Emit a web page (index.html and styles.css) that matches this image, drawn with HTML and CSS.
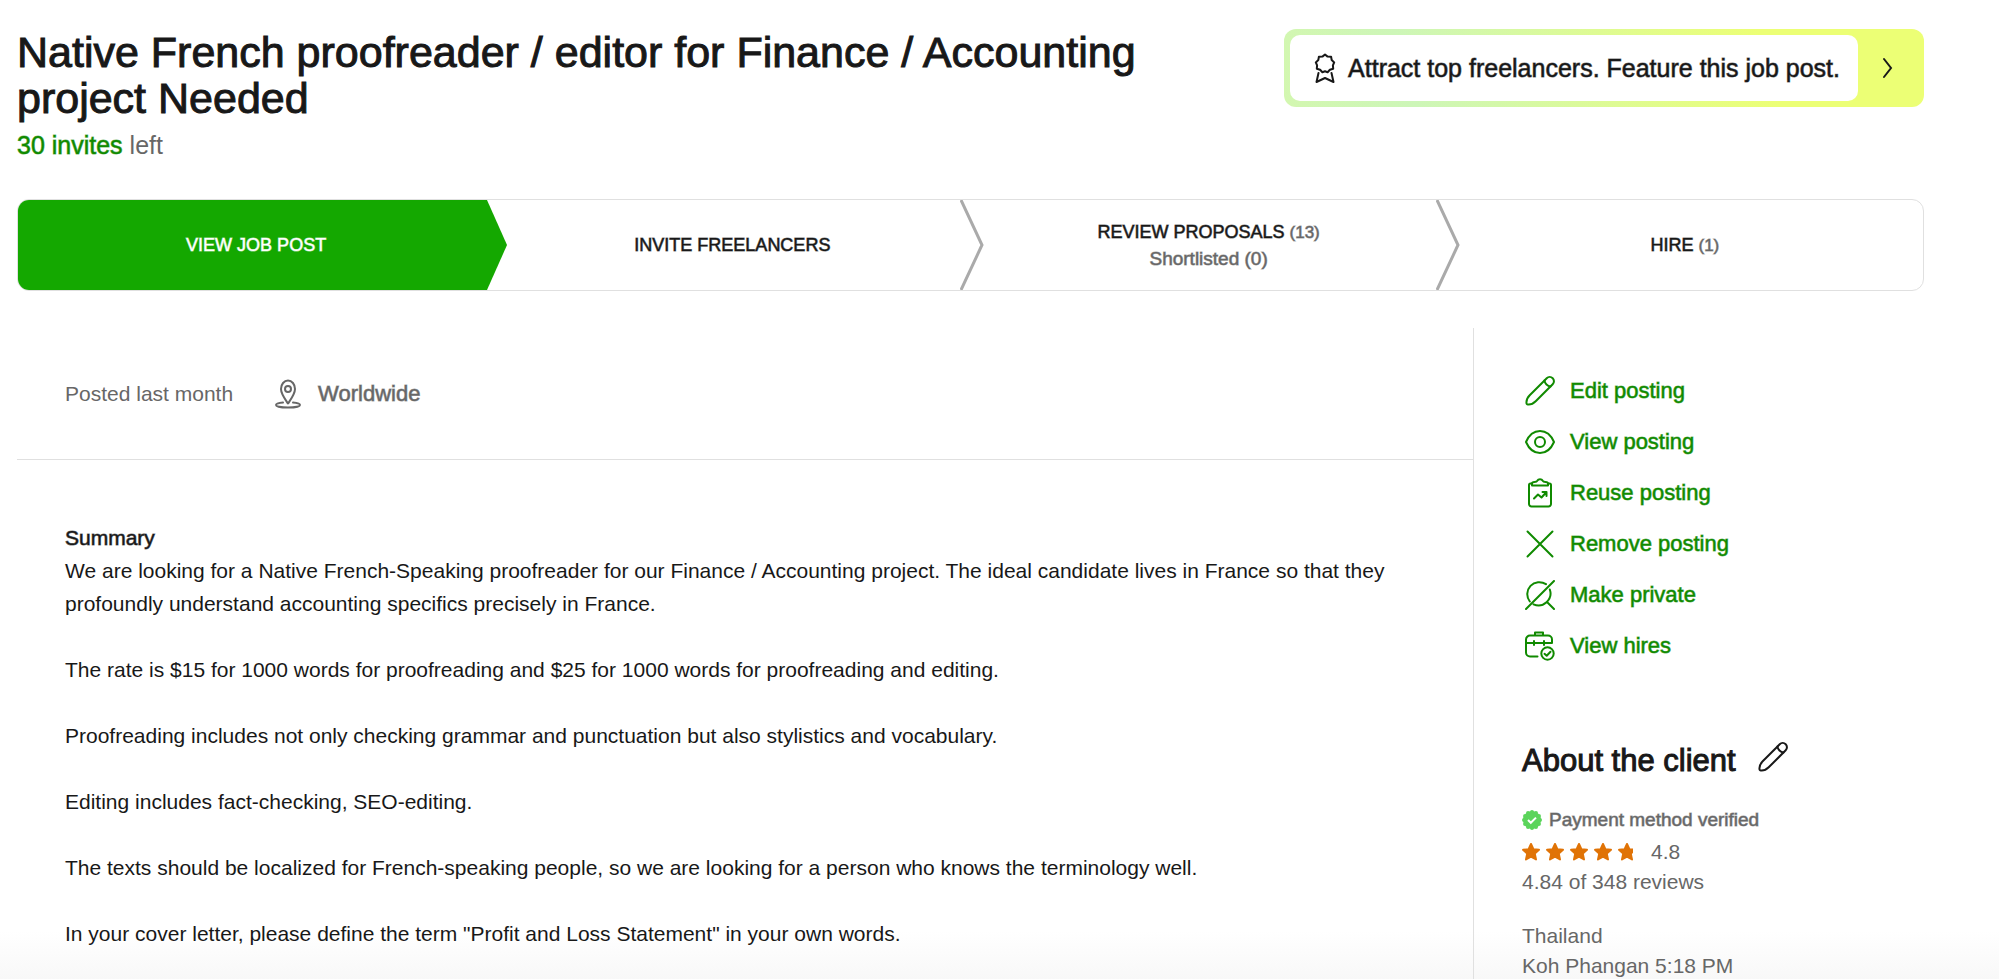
FILE: index.html
```
<!DOCTYPE html>
<html lang="en">
<head>
    <meta charset="UTF-8" />
    <meta name="viewport" content="width=device-width, initial-scale=1.0" />
    <title>Native French proofreader / editor - Job post</title>
    <link rel="stylesheet" href="styles.css">
</head>
<body>

    <!-- Job title + feature banner -->
    <header class="page-header">
        <div class="job-heading">
            <h1>Native French proofreader / editor for Finance / Accounting project Needed</h1>
            <p class="invites"><strong>30 invites</strong> left</p>
        </div>
        <a href="#feature" class="feature-banner">
            <span class="feature-text">
                <svg class="icon" viewBox="0 0 30 30">
                    <path d="M15 1.500l2.600 2.100 3.500.2.6 3.300 2.500 2.300-1.300 3 .3 3.300-3.300 1-2.300 2.500-2.600-.9-2.600.9-2.300-2.500-3.300-1 .3-3.300-1.300-3 2.500-2.300.6-3.300 3.500-.2z" />
                    <path d="M8.500 20l-2 9 8.500-4 8.500 4-2-9" />
                </svg>
                Attract top freelancers. Feature this job post.
            </span>
            <svg class="feature-arrow" viewBox="0 0 12 22">
                <path d="M2 2l7 9-7 9" />
            </svg>
        </a>
    </header>

    <!-- Hiring steps -->
    <nav class="steps">
        <a href="#view" class="step active">
            <span>VIEW JOB POST</span>
            <svg class="step-arrow" viewBox="0 0 24 90" preserveAspectRatio="none">
                <path d="M0 0h4l20 45-20 45H0z" />
            </svg>
        </a>
        <a href="#invite" class="step">
            <span>INVITE FREELANCERS</span>
            <svg class="step-arrow" viewBox="0 0 24 90" preserveAspectRatio="none">
                <path d="M1 0l21 45-21 45" />
            </svg>
        </a>
        <a href="#review" class="step">
            <span>REVIEW PROPOSALS <span class="count">(13)</span></span>
            <span class="shortlisted">Shortlisted (0)</span>
            <svg class="step-arrow" viewBox="0 0 24 90" preserveAspectRatio="none">
                <path d="M1 0l21 45-21 45" />
            </svg>
        </a>
        <a href="#hire" class="step">
            <span>HIRE <span class="count">(1)</span></span>
        </a>
    </nav>

    <div class="content">
        <main class="job">
            <div class="job-meta">
                <span>Posted last month</span>
                <span class="location">
                    <svg class="icon" viewBox="0 0 30 30">
                        <path d="M15 24.500c-3-4.500-7-9.500-7-14.500a7 8.500 0 0 1 14 0c0 5-4 10-7 14.500z" />
                        <circle cx="15" cy="10" r="3" />
                        <path d="M10 23.500c-4 .4-7 1.200-7 2.400 0 1.600 5 2.600 12 2.600s12-1 12-2.600c0-1.200-3-2-7-2.400" />
                    </svg>
                    Worldwide
                </span>
            </div>

            <div class="job-description">
                <h2>Summary</h2>
                <p>We are looking for a Native French-Speaking proofreader for our Finance / Accounting project. The ideal candidate lives in France so that they profoundly understand accounting specifics precisely in France.</p>
                <p>The rate is $15 for 1000 words for proofreading and $25 for 1000 words for proofreading and editing.</p>
                <p>Proofreading includes not only checking grammar and punctuation but also stylistics and vocabulary.</p>
                <p>Editing includes fact-checking, SEO-editing.</p>
                <p>The texts should be localized for French-speaking people, so we are looking for a person who knows the terminology well.</p>
                <p>In your cover letter, please define the term "Profit and Loss Statement" in your own words.</p>
            </div>
        </main>

        <aside class="sidebar">
            <ul class="actions">
                <li><a href="#edit">
                    <svg class="icon" viewBox="0 0 30 30">
                        <path d="M19.500 4.500l2.200-2.200a4.200 4.200 0 0 1 6 6l-17 17c-2.200 2.200-5.500 3.500-8 3.200a1.200 1.200 0 0 1-1.200-1.200c-.3-2.500 1-5.800 3.200-8z" />
                        <path d="M19.500 4.500c.3 3 3 5.700 6 6" />
                    </svg>
                    Edit posting</a></li>
                <li><a href="#view-posting">
                    <svg class="icon" viewBox="0 0 30 30">
                        <path d="M1 15c3-7 8-11 14-11s11 4 14 11c-3 7-8 11-14 11S4 22 1 15z" />
                        <circle cx="15" cy="15" r="5" />
                    </svg>
                    View posting</a></li>
                <li><a href="#reuse">
                    <svg class="icon" viewBox="0 0 30 30">
                        <path d="M7 5.500H5.500a1.500 1.500 0 0 0-1.500 1.500v19a2.500 2.500 0 0 0 2.500 2.500h17a2.500 2.500 0 0 0 2.500-2.500V7a1.500 1.500 0 0 0-1.500-1.500H23" />
                        <path d="M7 7.500V5.500c0-1 1-1.500 2.500-1.500 2 0 2.500-.5 3-1.500.8-1.800 4.200-1.800 5 0 .5 1 1 1.500 3 1.500C22 4 23 4.500 23 5.500v2z" />
                        <path d="M9 20.500l4-4 3.500 3 5-5.500M17.500 14h4v4" />
                    </svg>
                    Reuse posting</a></li>
                <li><a href="#remove">
                    <svg class="icon" viewBox="0 0 30 30">
                        <path d="M2.500 2.500l25 25M27.500 2.500l-25 25" />
                    </svg>
                    Remove posting</a></li>
                <li><a href="#private">
                    <svg class="icon" viewBox="0 0 30 30">
                        <path d="M29 1L1 29" />
                        <path d="M4.800 21.500A12 12 0 0 1 21 4.200M24.800 9.500A12 12 0 0 1 8.500 24.300M22 22l7 7" />
                    </svg>
                    Make private</a></li>
                <li><a href="#hires">
                    <svg class="icon" viewBox="0 0 30 30">
                        <path d="M12.500 25.500H5a4 4 0 0 1-4-4V8.500a4 4 0 0 1 4-4h18a4 4 0 0 1 4 4V12H1M10 4.500v-3h8v3M9 10v4M19 10v4" />
                        <circle cx="22.500" cy="22.500" r="6.200" />
                        <path d="M19.500 22.800l2.200 2 3.800-4" />
                    </svg>
                    View hires</a></li>
            </ul>

            <section class="client">
                <div class="client-heading">
                    <h2>About the client</h2>
                    <button type="button" class="edit-button" aria-label="Edit client">
                        <svg class="icon" viewBox="0 0 30 30">
                            <path d="M19.500 4.500l2.200-2.200a4.200 4.200 0 0 1 6 6l-17 17c-2.200 2.200-5.500 3.500-8 3.200a1.200 1.200 0 0 1-1.200-1.200c-.3-2.500 1-5.800 3.200-8z" />
                            <path d="M19.500 4.500c.3 3 3 5.700 6 6" />
                        </svg>
                    </button>
                </div>
                <p class="verified">
                    <svg class="badge" viewBox="0 0 20 20">
                        <circle cx="10" cy="10" r="9" />
                        <circle class="badge-edge" cx="10" cy="10" r="8" pathLength="48" />
                        <path d="M6 10l2.800 2.800L14 7.600" />
                    </svg>
                    Payment method verified
                </p>
                <div class="rating">
                    <svg class="stars" viewBox="0 0 114 18">
                        <defs>
                            <path id="star" d="M9 1l2.400 5.200 5.600.6-4.200 3.800 1.200 5.900L9 13.700l-5 2.800 1.200-5.900L1 6.800l5.600-.6z" />
                            <clipPath id="part"><rect width="111" height="18" /></clipPath>
                        </defs>
                        <use href="#star" />
                        <use href="#star" x="24" />
                        <use href="#star" x="48" />
                        <use href="#star" x="72" />
                        <g clip-path="url(#part)"><use href="#star" x="96" /></g>
                    </svg>
                    <span>4.8</span>
                </div>
                <p>4.84 of 348 reviews</p>
                <p class="place">Thailand<br>Koh Phangan 5:18 PM</p>
            </section>
        </aside>
    </div>

</body>
</html>
```
FILE: styles.css
```
* {
    box-sizing: border-box;
}

body {
    font-family: "Liberation Sans", Arial, sans-serif;
    font-size: 21px;
    line-height: 33px;
    color: #181818;
    background: linear-gradient(to top, #f8f8f8, #ffffff 48px) fixed;
    margin: 0;
    padding: 29px 75px 0 17px;
    display: flex;
    flex-direction: column;
    min-height: 100vh;
}

h1, h2, p, ul {
    margin: 0;
    padding: 0;
}

a {
    color: inherit;
    text-decoration: none;
}

/* medium weight: the regular face with a faint outline */
h2,
.invites strong,
.feature-text,
.step,
.location,
.actions a,
.verified {
    font-weight: 400;
    -webkit-text-stroke: 1px color-mix(in srgb, currentColor 60%, transparent);
}

.icon {
    width: 30px;
    height: 30px;
    flex: none;
    fill: none;
    stroke: currentColor;
    stroke-width: 2;
    stroke-linecap: round;
    stroke-linejoin: round;
}

/* Header */
.page-header {
    display: flex;
    justify-content: space-between;
    align-items: flex-start;
}

.job-heading {
    max-width: 1190px;
}

h1 {
    font-size: 43px;
    font-weight: 400;
    line-height: 46px;
    -webkit-text-stroke: 1px;
}

.invites {
    font-size: 25px;
    line-height: 48px;
    color: #676767;
}

    .invites strong {
        color: #108a00;
    }

.feature-banner {
    display: flex;
    align-items: center;
    padding: 6px;
    border-radius: 12px;
    background: linear-gradient(75deg, #d3f7b0, #cdf6b8 20%, #ecff75 75%);
}

.feature-text {
    display: flex;
    align-items: center;
    gap: 8px;
    padding: 17px 18px 17px 20px;
    border-radius: 10px;
    background-color: #fff;
    font-size: 25px;
    line-height: 32px;
}

.feature-arrow {
    width: 12px;
    height: 22px;
    margin: 0 24px;
    fill: none;
    stroke: #181818;
    stroke-width: 2;
    stroke-linecap: round;
}

/* Steps */
.steps {
    display: flex;
    margin-top: 30px;
    border: 1px solid #e0e0e0;
    border-radius: 12px;
}

.step {
    position: relative;
    flex: 1;
    display: flex;
    flex-direction: column;
    align-items: center;
    justify-content: center;
    height: 90px;
    font-size: 18px;
    line-height: 26px;
}

.count {
    color: #676767;
    font-size: 17px;
}

.shortlisted {
    color: #676767;
    font-size: 19px;
}

.step.active {
    color: #fff;
    background: linear-gradient(to left, transparent 10px, #14a800 10px);
    border-radius: 11px 0 0 11px;
}

.step-arrow {
    position: absolute;
    right: -13px;
    top: 0;
    width: 24px;
    height: 100%;
    fill: none;
    stroke: #aaaaaa;
    stroke-width: 3;
}

.active .step-arrow {
    fill: #14a800;
    stroke: none;
}

/* Content */
.content {
    flex: 1;
    display: flex;
    margin-top: 37px;
}

.job {
    flex: 1;
}

.job-meta {
    display: flex;
    align-items: center;
    gap: 40px;
    padding: 49px 48px;
    border-bottom: 1px solid #e0e0e0;
    color: #676767;
}

.location {
    display: flex;
    align-items: center;
    gap: 15px;
    font-size: 22px;
}

.job-description {
    padding: 61px 48px 0;
}

    .job-description h2 {
        font-size: 21px;
    }

    .job-description p {
        margin-bottom: 33px;
    }

/* Sidebar */
.sidebar {
    width: 451px;
    padding: 46px 0 0 48px;
    border-left: 1px solid #e0e0e0;
    color: #676767;
}

.actions {
    list-style: none;
    display: flex;
    flex-direction: column;
    gap: 18px;
}

    .actions a {
        display: flex;
        align-items: center;
        gap: 15px;
        padding-left: 3px;
        color: #108a00;
        font-size: 22px;
    }

.client {
    margin-top: 80px;
    line-height: 30px;
}

.client-heading {
    display: flex;
    align-items: flex-start;
    gap: 22px;
    margin-bottom: 23px;
    color: #181818;
}

    .client-heading h2 {
        font-size: 31px;
        line-height: 38px;
        -webkit-text-stroke: 1px;
    }

.edit-button {
    display: flex;
    padding: 0;
    border: none;
    background: none;
    color: inherit;
    cursor: pointer;
}

.verified {
    display: flex;
    align-items: center;
    gap: 7px;
    font-size: 19px;
    line-height: 34px;
}

.badge {
    width: 20px;
    height: 20px;
    fill: #5bd45b;
}

    .badge path {
        fill: none;
        stroke: #fff;
        stroke-width: 2;
    }

    /* round dots give the scalloped rim */
    .badge .badge-edge {
        fill: none;
        stroke: #5bd45b;
        stroke-width: 4;
        stroke-linecap: round;
        stroke-dasharray: 0 4;
    }

.rating {
    display: flex;
    align-items: center;
    gap: 15px;
}

.stars {
    width: 114px;
    height: 18px;
    fill: #e07306;
    stroke: #e07306;
    stroke-width: 2;
    stroke-linejoin: round;
}

.place {
    margin-top: 24px;
}
```
